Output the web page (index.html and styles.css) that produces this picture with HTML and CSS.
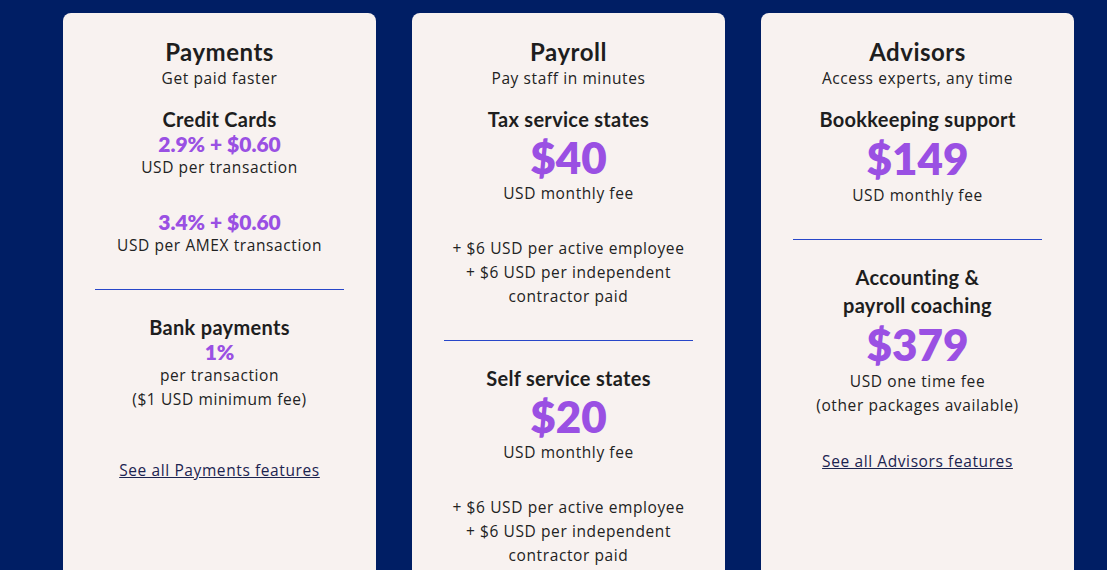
FILE: index.html
```html
<!DOCTYPE html>
<html lang="en">
<head>
    <meta charset="UTF-8">
    <meta name="viewport" content="width=device-width, initial-scale=1.0">
    <title>Pricing - Add-ons</title>
    <link rel="stylesheet" href="styles.css">
</head>
<body>

    <div class="plans">

        <!-- Payments -->
        <div class="plan-card">
            <h2 class="plan-title">Payments</h2>
            <p class="plan-tagline">Get paid faster</p>

            <h3 class="fee-name">Credit Cards</h3>
            <div class="fee-price small">2.9% + $0.60</div>
            <p class="fee-note">USD per transaction</p>

            <div class="fee-price small spaced">3.4% + $0.60</div>
            <p class="fee-note">USD per AMEX transaction</p>

            <hr class="divider">

            <h3 class="fee-name">Bank payments</h3>
            <div class="fee-price small">1%</div>
            <p class="fee-note">per transaction</p>
            <p class="fee-note">($1 USD minimum fee)</p>

            <a class="feature-link far" href="#">See all Payments features</a>
        </div>

        <!-- Payroll -->
        <div class="plan-card">
            <h2 class="plan-title">Payroll</h2>
            <p class="plan-tagline">Pay staff in minutes</p>

            <h3 class="fee-name">Tax service states</h3>
            <div class="fee-price">$40</div>
            <p class="fee-note">USD monthly fee</p>
            <p class="fee-extra">+ $6 USD per active employee<br>+ $6 USD per independent<br>contractor paid</p>

            <hr class="divider">

            <h3 class="fee-name">Self service states</h3>
            <div class="fee-price">$20</div>
            <p class="fee-note">USD monthly fee</p>
            <p class="fee-extra">+ $6 USD per active employee<br>+ $6 USD per independent<br>contractor paid</p>
        </div>

        <!-- Advisors -->
        <div class="plan-card">
            <h2 class="plan-title">Advisors</h2>
            <p class="plan-tagline">Access experts, any time</p>

            <h3 class="fee-name">Bookkeeping support</h3>
            <div class="fee-price tall">$149</div>
            <p class="fee-note">USD monthly fee</p>

            <hr class="divider">

            <h3 class="fee-name">Accounting &amp;<br>payroll coaching</h3>
            <div class="fee-price tall">$379</div>
            <p class="fee-note">USD one time fee</p>
            <p class="fee-note">(other packages available)</p>

            <a class="feature-link" href="#">See all Advisors features</a>
        </div>

    </div>

</body>
</html>
```

FILE: styles.css
```css
body {
    margin: 0;
    background-color: #001e64;
    font-family: "Open Sans", sans-serif;
    color: #222222;
    overflow: hidden;
}

/* --- three cards in a row --- */
.plans {
    display: grid;
    grid-template-columns: repeat(3, 313px);
    gap: 36px;
    padding: 13px 0 0 63px;
}

.plan-card {
    background-color: #f8f2f0;
    border-radius: 8px;
    padding: 25px 32px 60px;
    min-height: 600px;
    display: flex;
    flex-direction: column;
    align-items: center;
    text-align: center;
}

.plan-title {
    margin: 0;
    font-family: "Lato", sans-serif;
    font-size: 24px;
    font-weight: 700;
    letter-spacing: 0.5px;
    line-height: 28px;
    color: #1e1e1e;
}

.plan-tagline {
    margin: 0;
    font-size: 15.5px;
    letter-spacing: 0.6px;
    line-height: 24px;
}

/* --- fee blocks --- */
.fee-name {
    margin: 15px 0 0;
    font-family: "Lato", sans-serif;
    font-size: 20px;
    font-weight: 700;
    letter-spacing: 0.3px;
    line-height: 28px;
    color: #1e1e1e;
}

.divider + .fee-name {
    margin-top: 0;
}

.fee-price {
    font-family: "Lato", sans-serif;
    font-size: 44px;
    font-weight: 800;
    line-height: 48px;
    color: #9a50e3;
}

.fee-price.tall {
    line-height: 50px;
}

.fee-price.small {
    font-size: 21px;
    line-height: 22px;
}

.fee-price.spaced {
    margin-top: 32px;
}

.fee-note {
    margin: 0;
    font-size: 15.5px;
    letter-spacing: 0.6px;
    line-height: 24px;
}

.fee-extra {
    margin: 31px 0 0;
    font-size: 15.5px;
    letter-spacing: 0.6px;
    line-height: 24px;
}

.divider {
    align-self: stretch;
    border: none;
    border-top: 1px solid #2847c9;
    margin: 32px 0 23px;
}

.feature-link {
    margin-top: 32px;
    font-size: 15.5px;
    letter-spacing: 0.6px;
    line-height: 24px;
    color: #1c2450;
    text-decoration: underline;
}

.feature-link.far {
    margin-top: 47px;
}
```
